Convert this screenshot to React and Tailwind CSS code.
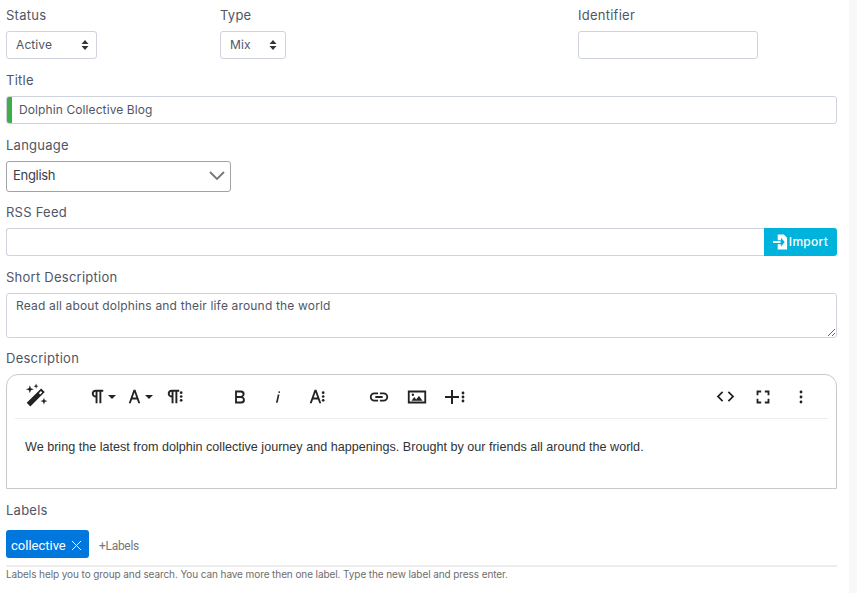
const Dots = ({ x = 20 }) => (
  <g fill="#222">
    <circle cx={x} cy="8" r="1.400" />
    <circle cx={x} cy="12" r="1.400" />
    <circle cx={x} cy="16" r="1.400" />
  </g>
);

const Icon = ({ children, size = 24 }) => (
  <svg width={size} height={size} viewBox="0 0 24 24" fill="#222">
    {children}
  </svg>
);

const Pilcrow = "M10.15 5A4.11 4.11 0 0 0 6.08 8.18 4 4 0 0 0 10 13v6h2V7h2v12h2V7h2V5ZM8 9a2 2 0 0 1 2-2v4a2 2 0 0 1-2-2Z";
const LetterA = "M16 19h2L13 5h-2L6 19h2l1.43-4h5.14Zm-5.86-6L12 7.8l1.86 5.2Z";

const Caret = () => <span className="-ml-[1px] h-0 w-0 border-x-[4px] border-t-[4px] border-x-transparent border-t-[#222]" />;

const Btn = ({ w = "w-[38px]", children }) => (
  <div className={`flex h-[24px] ${w} items-center justify-center`}>{children}</div>
);

const Label = ({ children, className = "" }) => (
  <div className={`h-[20px] text-[13px] leading-[20px] tracking-[0.25px] text-[#4f5666] ${className}`}>{children}</div>
);

const Stepper = () => (
  <svg width="8" height="12" viewBox="0 0 8 12" fill="#333">
    <path d="M4 1 7.5 5h-7zM4 11 .5 7h7z" />
  </svg>
);

const inputClass = "block h-[28px] rounded-[3px] border border-[#cfd3de] bg-white px-[12px] text-[12px] tracking-[0.1px] text-[#4f5666] outline-none";

export default function App() {
  return (
    <div className="h-[593px] w-[857px] overflow-hidden bg-[#f8f8f9] font-['Inter',sans-serif]">
      <div className="h-full w-[849px] bg-white pl-[6px] pr-[12px] pt-[5px]">
        <div className="flex">
          <div className="w-[214px]">
            <Label>Status</Label>
            <div className={`${inputClass} mt-[6px] flex w-[91px] items-center justify-between !pl-[9px] !pr-[7px]`}>
              <span>Active</span>
              <Stepper />
            </div>
          </div>
          <div className="w-[358px]">
            <Label>Type</Label>
            <div className={`${inputClass} mt-[6px] flex w-[66px] items-center justify-between !pl-[9px] !pr-[8px]`}>
              <span>Mix</span>
              <Stepper />
            </div>
          </div>
          <div>
            <Label>Identifier</Label>
            <input readOnly className={`${inputClass} mt-[6px] w-[180px]`} />
          </div>
        </div>

        <Label className="mt-[11px]">Title</Label>
        <div className={`${inputClass} mt-[6px] flex w-full items-center overflow-hidden !pl-0`}>
          <span className="mr-[7px] h-full w-[5px] bg-[#3fae49]" />
          <span className="pb-[1px]">Dolphin Collective Blog</span>
        </div>

        <Label className="mt-[11px]">Language</Label>
        <div className="mt-[6px] flex h-[31px] w-[225px] items-center justify-between rounded-[3px] border border-[#a3a3a3] bg-white pl-[6px] pr-[5px] text-[13px] tracking-[-0.3px] text-[#3a3d4a]">
          <span className="pb-[2px]">English</span>
          <svg width="16" height="9" viewBox="0 0 16 9" fill="none" stroke="#777" strokeWidth="1.800" className="mb-[2px]">
            <path d="M1 1l7 7 7-7" />
          </svg>
        </div>

        <Label className="mt-[10px]">RSS Feed</Label>
        <div className="mt-[6px] flex">
          <input readOnly className={`${inputClass} min-w-0 flex-1 !rounded-r-none !border-r-0`} />
          <div className="flex h-[28px] w-[73px] items-center justify-center rounded-r-[3px] bg-[#00b3dc] text-[12px] font-medium tracking-[0.3px] text-white">
            <svg width="15" height="16" viewBox="0 0 16 16" fill="#fff" className="mr-[1px]">
              <path d="M5 0h6.500L15 3.500V16H5v-5.500h3.500V13L12.500 8 8.500 3.500V6H5zM0 7h8v2H0z" />
            </svg>
            Import
          </div>
        </div>

        <Label className="mt-[11px]">Short Description</Label>
        <textarea
          readOnly
          className="mt-[6px] block h-[45px] w-full rounded-[3px] border border-[#cfd3de] bg-white px-[9px] py-[3px] text-[12px] leading-[18px] tracking-[0.17px] text-[#4f5666] outline-none"
          value="Read all about dolphins and their life around the world"
        />

        <Label className="mt-[10px]">Description</Label>
        <div className="mt-[6px] h-[115px] rounded-t-[12px] border border-[#c9c9c9] bg-white">
          <div className="mx-[8px] flex h-[44px] items-center border-b border-[#ececec] pr-[8px] pl-[1px]">
            <Btn>
              <svg width="27" height="27" viewBox="0 0 24 24" fill="#222">
                <path d="M17 4.800 20.200 8 7.400 20.800 4.200 17.600zM15 9l1.200 1.200 1.800-1.800-1.200-1.200z" fillRule="evenodd" />
                <path d="M7 2 7.900 4.700 10.500 5.600 7.900 6.500 7 9.200 6.100 6.500 3.500 5.600 6.100 4.700zM12.500 .5l.6 1.700 1.700.6-1.700.6-.6 1.700-.6-1.700-1.700-.6 1.700-.6zM19.500 13l.8 2.300 2.300.8-2.300.8-.8 2.300-.8-2.300-2.300-.8 2.300-.8z" />
              </svg>
            </Btn>
            <div className="ml-[28px] flex">
              <Btn w="w-[37px]">
                <Icon size={23}><path d={Pilcrow} /></Icon>
                <Caret />
              </Btn>
              <Btn w="w-[37px]">
                <Icon size={23}><path d={LetterA} /></Icon>
                <Caret />
              </Btn>
              <Btn w="w-[37px]">
                <span className="mr-[3px] flex">
                  <Icon size={23}><path d={Pilcrow} /><Dots /></Icon>
                </span>
              </Btn>
            </div>
            <div className="ml-[28px] flex">
              <Btn>
                <Icon size={22}>
                  <path d="M15.25 11.800A3.680 3.680 0 0 0 17 9a3.930 3.930 0 0 0-3.860-4H6.650v14h7a3.740 3.740 0 0 0 3.700-3.780V15.100a3.640 3.640 0 0 0-2.100-3.300ZM8.650 7h4.200a2 2 0 0 1 0 4h-4.200Zm4.600 10h-4.600v-4h4.600a2 2 0 0 1 0 4Z" />
                </Icon>
              </Btn>
              <Btn>
                <Icon size={20}>
                  <path d="M11.760 9h2l-2.200 10h-2Zm1.680-4a1.100 1.100 0 1 0 1.100 1.100A1.100 1.100 0 0 0 13.440 5Z" />
                </Icon>
              </Btn>
              <Btn>
                <span className="-ml-[2px] flex">
                  <Icon size={23}><path d={LetterA} /><Dots /></Icon>
                </span>
              </Btn>
            </div>
            <div className="ml-[25px] flex">
              <Btn>
                <Icon size={22}>
                  <path d="M11 17H7A5 5 0 0 1 7 7h4v2H7a3 3 0 0 0 0 6h4Zm6-10h-4v2h4a3 3 0 0 1 0 6h-4v2h4a5 5 0 0 0 0-10Zm-1 4H8v2h8Z" />
                </Icon>
              </Btn>
              <Btn>
                <Icon size={22}>
                  <path d="M14.200 11 18 16H6l3-3.900 2.100 2.700L14 11ZM2 5v14h20V5Zm18 12H4V7h16Z" />
                  <circle cx="7.500" cy="9.500" r="1.300" />
                </Icon>
              </Btn>
              <Btn>
                <Icon size={24}>
                  <path d="M16 13h-6v6H8v-6H2v-2h6V5h2v6h6Z" />
                  <Dots x={20} />
                </Icon>
              </Btn>
            </div>
            <div className="ml-auto flex">
              <Btn>
                <Icon size={21}>
                  <path d="M9.400 16.600 4.800 12l4.600-4.600L8 6l-6 6 6 6Zm5.200 0 4.600-4.600-4.600-4.600L16 6l6 6-6 6Z" />
                </Icon>
              </Btn>
              <Btn>
                <Icon size={22}>
                  <path d="M7 14H5v5h5v-2H7Zm-2-4h2V7h3V5H5Zm12 7h-3v2h5v-5h-2ZM14 5v2h3v3h2V5Z" />
                </Icon>
              </Btn>
              <Btn>
                <Icon size={20}>
                  <circle cx="12" cy="6" r="1.700" />
                  <circle cx="12" cy="12" r="1.700" />
                  <circle cx="12" cy="18" r="1.700" />
                </Icon>
              </Btn>
            </div>
          </div>
          <p className="pl-[18px] pt-[19px] font-['Liberation_Sans',sans-serif] text-[12.6px] leading-[18px] text-[#333]">
            We bring the latest from dolphin collective journey and happenings. Brought by our friends all around the world.
          </p>
        </div>

        <Label className="mt-[11px]">Labels</Label>
        <div className="mt-[10px] flex h-[37px] items-start border-b-2 border-[#ececec]">
          <div className="flex h-[28px] w-[83px] items-center rounded-[3px] bg-[#0077dd] pl-[5px] pt-[3px] font-['Roboto',sans-serif] text-[13px] text-white">
            collective
            <svg width="11" height="11" viewBox="0 0 11 11" stroke="#fff" strokeWidth="1" className="ml-[5px]">
              <path d="M1 1l9 9M10 1l-9 9" />
            </svg>
          </div>
          <span className="ml-[10px] font-['Roboto',sans-serif] text-[12px] leading-[32px] tracking-[-0.3px] text-[#777]">+Labels</span>
        </div>
        <div className="text-[10px] leading-[14px] tracking-[-0.09px] text-[#6d6d6d]">
          Labels help you to group and search. You can have more then one label. Type the new label and press enter.
        </div>
      </div>
    </div>
  );
}
